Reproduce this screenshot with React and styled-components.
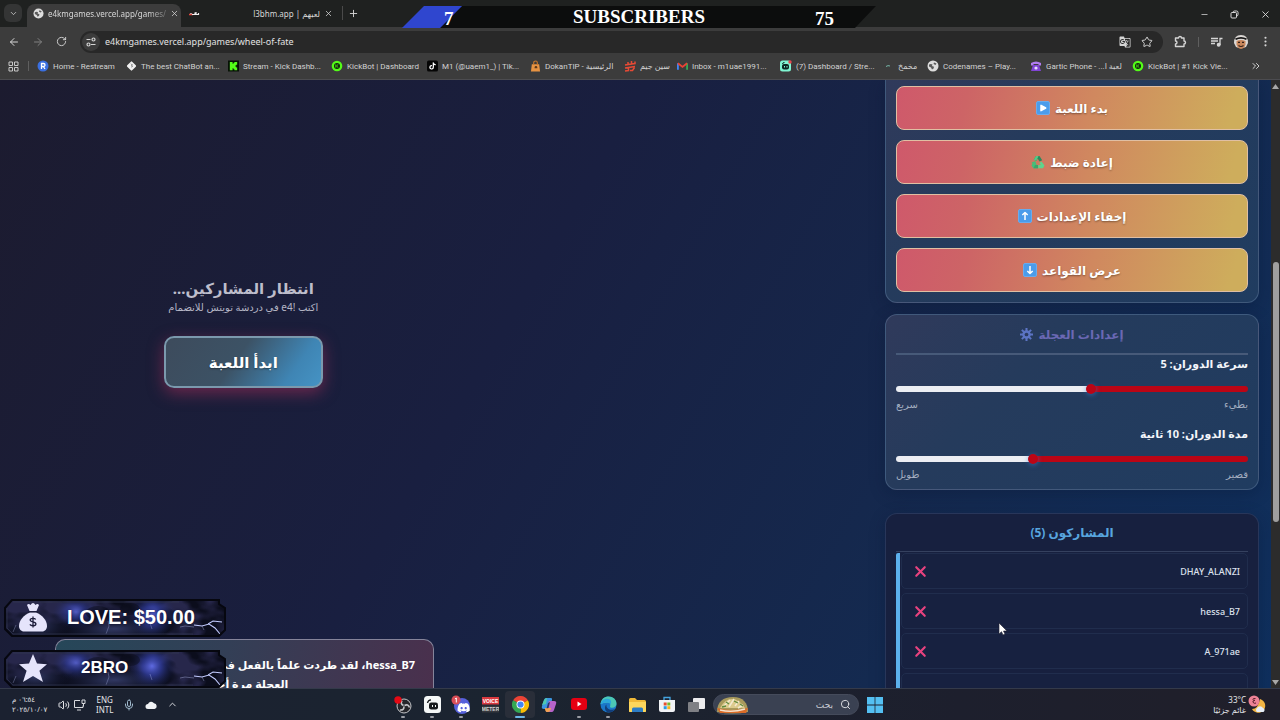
import React, { useState } from "react";
import styled, { createGlobalStyle } from "styled-components";
import {
  ArrowLeft,
  ArrowRight,
  ChevronDown,
  ChevronUp,
  ChevronsRight,
  EllipsisVertical,
  Mic,
  Minus,
  Plus,
  RotateCw,
  Search,
  Star,
  Volume2,
  X,
} from "lucide-react";
import { FaDiscord, FaTiktok } from "react-icons/fa";
import { MdGTranslate } from "react-icons/md";

const UI = `"Noto Sans", "DejaVu Sans", sans-serif`;

const GlobalStyle = createGlobalStyle`
  * {
    box-sizing: border-box;
  }
  body {
    margin: 0;
    background: #1a1a2e;
    font-family: ${UI};
  }
  button, input {
    font-family: inherit;
  }
  button {
    padding: 0;
    border: none;
    background: none;
    color: inherit;
    cursor: pointer;
  }
  a {
    color: inherit;
    text-decoration: none;
  }
`;

const Window = styled.div`
  display: flex;
  flex-direction: column;
  height: 100vh;
  overflow: hidden;
  position: relative;
`;

/* ---------- browser chrome ---------- */

const TabStrip = styled.div`
  display: flex;
  align-items: flex-end;
  height: 27px;
  flex: none;
  background: #1f2120;
  color: #d8d8d8;
`;

const TabSearch = styled.button`
  width: 18px;
  height: 18px;
  margin: 0 5px 5px 4px;
  border-radius: 6px;
  && {
    background: #343535;
  }
  display: flex;
  align-items: center;
  justify-content: center;
`;

const Tab = styled.div`
  display: flex;
  align-items: center;
  gap: 4px;
  width: ${({ $active }) => ($active ? "154px" : "158px")};
  height: 23px;
  padding: 0 6px 4px;
  border-radius: 8px 8px 0 0;
  background: ${({ $active }) => ($active ? "#3c3c3c" : "transparent")};
  font-size: 8px;
  svg {
    flex: none;
  }
  button {
    display: flex;
  }
`;

const TabTitle = styled.span`
  flex: 1;
  white-space: nowrap;
  text-align: ${({ $end }) => ($end ? "right" : "left")};
  mask-image: ${({ $end }) => ($end ? "none" : "linear-gradient(to right, #000 85%, rgba(0, 0, 0, 0.3))")};
`;

const NewTab = styled.button`
  display: flex;
  align-items: center;
  height: 14px;
  margin: 0 0 7px 3px;
  && {
    padding-left: 5px;
    border-left: 1px solid #4a4a4a;
  }
`;

const WindowButtons = styled.div`
  display: flex;
  align-items: center;
  margin-left: auto;
  padding: 0 9px 7px 0;
  gap: 21px;
  button {
    display: flex;
  }
`;

const Toolbar = styled.div`
  display: flex;
  align-items: center;
  height: 29px;
  flex: none;
  padding: 0 8px;
  background: #3c3c3c;
  color: #d5d5d5;
`;

const NavButtons = styled.div`
  display: flex;
  gap: 12px;
  width: 72px;
  button {
    display: flex;
  }
`;

const AddressBar = styled.div`
  display: flex;
  align-items: center;
  flex: 1;
  height: 22px;
  padding: 0 10px 0 2px;
  gap: 5px;
  border-radius: 11px;
  background: #282828;
`;

const SiteInfo = styled.button`
  width: 18px;
  height: 18px;
  border-radius: 9px;
  && {
    background: #3c3c3c;
  }
  display: flex;
  align-items: center;
  justify-content: center;
`;

const UrlInput = styled.input`
  flex: 1;
  min-width: 0;
  border: none;
  outline: none;
  background: none;
  color: #e2e2e2;
  font-size: 9px;
  padding: 0;
`;

const ToolbarEnd = styled.div`
  display: flex;
  align-items: center;
  gap: 11px;
  margin-left: 11px;
  button {
    display: flex;
  }
`;

const Bar = styled.span`
  width: 1px;
  height: 10px;
  background: #5f5f5f;
`;

const Bookmarks = styled.nav`
  display: flex;
  align-items: center;
  height: 24px;
  flex: none;
  padding: 0 18px 3px 8px;
  background: #3c3c3c;
  border-bottom: 1px solid #4c4c50;
  color: #d2d2d2;
  font-family: Roboto, "DejaVu Sans", sans-serif;
  font-size: 8px;
`;

const AppsCell = styled.button`
  display: flex;
  align-items: center;
  justify-content: space-between;
  width: 21px;
  margin-right: 8px;
`;

const Bookmark = styled.a`
  display: flex;
  align-items: center;
  gap: 4px;
  width: ${({ $width }) => $width}px;
  white-space: nowrap;
  svg {
    flex: none;
  }
`;

/* ---------- page ---------- */

const Viewport = styled.main`
  display: flex;
  flex: 1;
  min-height: 0;
  position: relative;
`;

const Page = styled.div`
  display: flex;
  flex: 1;
  min-width: 0;
  overflow: hidden;
  padding-right: 12px;
  background: linear-gradient(120deg, #1c1b2f 0%, #191f40 40%, #142a50 75%, #0f305e 100%);
`;

const Stage = styled.section`
  flex: 1;
  position: relative;
`;

const Waiting = styled.div`
  width: 55%;
  padding-top: 198px;
  display: flex;
  flex-direction: column;
  align-items: center;
  color: #bdbdcb;
`;

const WaitingTitle = styled.h2`
  margin: 0;
  font-size: 15px;
  line-height: 20px;
`;

const WaitingHint = styled.p`
  margin: 0;
  font-size: 10px;
  line-height: 18px;
  color: #b4b5c4;
`;

const PlayButton = styled.button`
  width: 159px;
  height: 52px;
  margin-top: 20px;
  && {
    border: 2px solid #7b99ad;
    background: linear-gradient(125deg, #3d4b5c 0%, #3c5265 45%, #3f85b4 80%, #4593c4 100%);
    color: #fff;
  }
  border-radius: 10px;
  box-shadow: 0 5px 16px rgba(190, 50, 95, 0.5);
  font-size: 15px;
  font-weight: 700;
  text-shadow: 0 1px 2px rgba(0, 0, 0, 0.4);
`;

const Toast = styled.div`
  position: absolute;
  left: 55px;
  bottom: 0;
  width: 379px;
  height: 49px;
  padding: 15px 18px 0;
  overflow: hidden;
  border: 1px solid #85849a;
  border-bottom: none;
  border-radius: 10px 10px 0 0;
  background: linear-gradient(100deg, #264759 0%, #333f56 45%, #4a304d 100%);
  color: #fff;
  font-size: 11px;
  font-weight: 700;
  line-height: 19px;
`;

const ToastLine = styled.div`
  text-align: ${({ $center }) => ($center ? "center" : "right")};
  white-space: nowrap;
`;

const Sidebar = styled.aside`
  width: 374px;
  flex: none;
`;

const Card = styled.section`
  padding: 0 10px 7px;
  margin-top: 11px;
  border: 1px solid rgba(150, 180, 215, 0.25);
  border-radius: 12px;
  background: linear-gradient(135deg, #303a5b 0%, #253b5c 35%, #203c60 100%);
  box-shadow: 0 4px 16px rgba(8, 20, 50, 0.3);
`;

const ControlsCard = styled(Card)`
  display: flex;
  flex-direction: column;
  gap: 10px;
  margin-top: 0;
  padding: 6px 10px 10px;
  border-top: none;
  border-radius: 0 0 12px 12px;
`;

const ListCard = styled(Card)`
  margin-top: 23px;
  min-height: 220px;
  border-color: rgba(110, 145, 200, 0.2);
  background: #17203f;
`;

const ControlButton = styled.button`
  display: flex;
  align-items: center;
  justify-content: center;
  gap: 5px;
  height: 44px;
  border-radius: 8px;
  && {
    border: 1px solid #e0bfa3;
    background: linear-gradient(105deg, #cf596b 0%, #cd6466 20%, #d0885f 55%, #cead5c 95%);
    color: #fff;
  }
  font-size: 12px;
  font-weight: 700;
  text-shadow: 0 1px 2px rgba(0, 0, 0, 0.4);
`;

const CardTitle = styled.h3`
  display: flex;
  align-items: center;
  justify-content: center;
  gap: 5px;
  height: ${({ $thin }) => ($thin ? "38px" : "40px")};
  margin: 0;
  border-bottom: ${({ $thin }) => ($thin ? "1px solid #35415f" : "2px solid #475a79")};
  color: ${({ $color }) => $color};
  font-size: 12px;
`;

const Setting = styled.div`
  display: flex;
  flex-direction: column;
  & + & {
    margin-top: 13px;
  }
`;

const SettingLabel = styled.label`
  color: #f3f5fa;
  font-size: 11px;
  font-weight: 700;
  line-height: 18px;
`;

const Range = styled.input`
  appearance: none;
  width: 100%;
  height: 12px;
  margin: 10px 0 2px;
  background: none;
  &::-webkit-slider-runnable-track {
    height: 6px;
    border-radius: 3px;
    background: linear-gradient(to left, #bb0515 ${({ $fill }) => $fill}%, #eceef3 ${({ $fill }) => $fill}%);
  }
  &::-webkit-slider-thumb {
    appearance: none;
    width: 10px;
    height: 10px;
    margin-top: -2px;
    border-radius: 5px;
    background: #bb0515;
    box-shadow: 0 1px 5px rgba(50, 130, 220, 0.6);
  }
`;

const RangeEnds = styled.div`
  display: flex;
  justify-content: space-between;
  color: #a3aec0;
  font-size: 10px;
  line-height: 15px;
`;

const PlayerList = styled.ul`
  display: flex;
  flex-direction: column;
  gap: 4px;
  margin: 1px 0 0;
  padding: 0;
  list-style: none;
  border-left: 4px solid #5cb0ec;
  border-radius: 2px;
`;

const PlayerRow = styled.li`
  display: flex;
  align-items: center;
  justify-content: space-between;
  height: 36px;
  margin-left: 1px;
  padding: 0 7px 0 10px;
  border: 1px solid #202d4d;
  border-radius: 5px;
  background: #172140;
  color: #dde2ee;
  font-size: 9px;
  font-weight: 500;
  button {
    display: flex;
  }
`;

const Scrollbar = styled.div`
  display: grid;
  grid-template-rows: 12px 170fr 260fr 154fr 12px;
  justify-items: center;
  align-items: center;
  width: 9px;
  flex: none;
  background: #2c2c2c;
`;

const Thumb = styled.span`
  grid-row: 3;
  width: 6px;
  height: 100%;
  border-radius: 3px;
  background: #9f9f9f;
`;

/* ---------- stream overlays ---------- */

const GoalBar = styled.div`
  position: absolute;
  top: 6px;
  left: 50%;
  width: 474px;
  height: 22px;
  margin-left: -238px;
  padding: 0 42px;
  display: grid;
  grid-template-columns: 1fr auto 1fr;
  align-items: center;
  clip-path: polygon(22px 0, 100% 0, 453px 100%, 0 100%);
  background: linear-gradient(135deg, #2f46cf 0 42px, #0c0d0d 43px);
  color: #fff;
  font-family: "Liberation Serif", serif;
  font-size: 19px;
  font-weight: 700;
  line-height: 22px;
`;

const GoalCount = styled.span`
  padding-top: 4px;
  line-height: 18px;
  text-align: ${({ $end }) => ($end ? "right" : "left")};
`;

const Badges = styled.div`
  position: absolute;
  left: 4px;
  bottom: 0;
  display: flex;
  flex-direction: column;
  gap: 13px;
`;

const Badge = styled.div`
  position: relative;
  width: 222px;
  height: 38px;
  display: flex;
  align-items: center;
  padding-bottom: 2px;
  color: #fff;
  font-family: "Liberation Sans", sans-serif;
  font-size: ${({ $size }) => $size}px;
  font-weight: 700;
  > svg:first-child {
    position: absolute;
    inset: 0;
  }
`;

const BadgeIcon = styled.span`
  position: relative;
  display: flex;
  margin-left: 14px;
`;

const BadgeText = styled.span`
  position: relative;
  margin-left: ${({ $indent }) => $indent}px;
  text-shadow: 0 0 3px rgba(0, 0, 30, 0.6);
`;

const Pointer = styled.svg`
  position: absolute;
  left: 998px;
  top: 542px;
`;

/* ---------- taskbar ---------- */

const Taskbar = styled.footer`
  display: grid;
  grid-template-columns: 1fr auto 1fr;
  align-items: center;
  height: 32px;
  flex: none;
  padding: 0 12px;
  border-top: 1px solid #343a4a;
  background: linear-gradient(to right, #1b2130, #1b2430 40%, #1d1f2d 75%, #201f2a);
  color: #e4e5e9;
  font-size: 8px;
  line-height: 10px;
`;

const Tray = styled.div`
  display: flex;
  align-items: center;
  gap: 10px;
`;

const Clock = styled.time`
  width: 36px;
  font-size: 7px;
  text-align: left;
  white-space: nowrap;
`;

const TrayPair = styled.span`
  display: flex;
  gap: 3px;
`;

const Lang = styled.span`
  text-align: center;
`;

const Dock = styled.div`
  display: flex;
  align-items: center;
  padding-right: 9px;
`;

const Apps = styled.div`
  display: grid;
  grid-template-columns: repeat(11, 1fr);
  width: 323px;
  margin-right: 2px;
`;

const AppButton = styled.button`
  position: relative;
  height: 27px;
  display: flex;
  align-items: center;
  justify-content: center;
  border-radius: 4px;
  && {
    background: ${({ $active }) => ($active ? "#292e39" : "none")};
  }
  &::after {
    content: "";
    position: absolute;
    bottom: 0;
    width: ${({ $active }) => ($active ? "10px" : "4px")};
    height: 2px;
    border-radius: 1px;
    background: ${({ $active, $open }) => ($active ? "#6cb7e8" : $open ? "#9a9da5" : "none")};
  }
`;

const SearchBox = styled.label`
  display: flex;
  align-items: center;
  gap: 5px;
  width: 146px;
  height: 21px;
  padding: 0 7px 0 2px;
  margin-right: 8px;
  border: 1px solid #454b5b;
  border-radius: 11px;
  background: #3a4152;
  input {
    flex: 1;
    min-width: 0;
    padding: 0 2px;
    border: none;
    outline: none;
    background: none;
    font-size: 9px;
  }
  input::placeholder {
    color: #c9ccd4;
  }
`;

const Weather = styled.div`
  display: flex;
  align-items: center;
  justify-content: flex-end;
  gap: 2px;
  text-align: right;
`;

/* ---------- drawings ---------- */

const Globe = ({ size = 12 }) => (
  <svg width={size} height={size} viewBox="0 0 12 12">
    <circle cx="6" cy="6" r="5.500" fill="#dedede" />
    <path d="M2 4.500q2-1 3.500 0l-.5 1.500 2 .8-.4 1.700L5 9.500 4 7.500 2 6.500zM7 2.500l2.500 1-1 1.500-2-1z" fill="#5b5b5b" />
  </svg>
);

const KickBot = () => (
  <svg width="12" height="12" viewBox="0 0 12 12">
    <circle cx="6" cy="6" r="5.300" fill="#53fc18" />
    <circle cx="6" cy="6" r="3" fill="#12240c" />
    <path d="M4.800 4.400v3.200M7.300 4.300L5.500 6l1.800 1.700" stroke="#53fc18" strokeWidth="0.800" fill="none" />
  </svg>
);

const bookmarkIcons = {
  restream: (
    <svg width="12" height="12" viewBox="0 0 12 12">
      <circle cx="6" cy="6" r="5.500" fill="#3a6fe0" />
      <path d="M4.500 9V3.500h2a1.500 1.500 0 010 3h-2M6.300 6.500L8 9" stroke="#fff" strokeWidth="1.300" fill="none" />
    </svg>
  ),
  bot: (
    <svg width="11" height="12" viewBox="0 0 12 12">
      <path d="M6 2l4 4-4 4-4-4z" fill="#f0f0f0" stroke="#f0f0f0" strokeWidth="2" strokeLinejoin="round" />
      <path d="M5.500 3.500L7 5 5.500 6.200M7.500 6L6 7.200" stroke="#5a5a5a" strokeWidth="0.900" fill="none" />
    </svg>
  ),
  kick: (
    <svg width="11" height="12" viewBox="0 0 12 12">
      <rect width="12" height="12" fill="#071106" />
      <path d="M2 1.500h3v2h1v-1h1v-1h3v3H9v1H8v1h1v1h1v3H7v-1H6v-1H5v2H2z" fill="#53fc18" />
    </svg>
  ),
  kickbot: <KickBot />,
  tiktok: (
    <svg width="11" height="12" viewBox="0 0 12 12">
      <rect width="12" height="12" rx="2" fill="#050505" />
      <FaTiktok x="2" y="2" width="8" height="8" color="#fff" />
    </svg>
  ),
  dokan: (
    <svg width="11" height="12" viewBox="0 0 12 12">
      <path d="M2 4h8l1 8H1z" fill="#e79342" />
      <path d="M4 5V2.500a2 2 0 014 0V5" stroke="#c6762b" strokeWidth="1.200" fill="none" />
      <path d="M5 7.500a1.500 1.500 0 113 0v1H5z" fill="#5b3719" />
    </svg>
  ),
  seen: (
    <svg width="12" height="12" viewBox="0 0 12 12">
      <path d="M1 5l3-.5V2M4 4.500L7.500 4V1M7.500 4L11 3.500V1.500M1 8l10-1.500M1 11l3.500-.5V8M6 10.500h2.500l2-3" stroke="#e64a35" strokeWidth="1.500" fill="none" />
    </svg>
  ),
  gmail: (
    <svg width="11" height="12" viewBox="0 0 12 12">
      <path d="M1 10V3" stroke="#4285f4" strokeWidth="2" />
      <path d="M11 10V3" stroke="#34a853" strokeWidth="2" />
      <path d="M1 3l5 4 5-4" stroke="#ea4335" strokeWidth="2" fill="none" />
    </svg>
  ),
  stream: (
    <svg width="12" height="12" viewBox="0 0 12 12">
      <rect y="0.500" width="11" height="11" rx="2.500" fill="#80f5d2" />
      <rect x="2" y="4" width="7" height="5.500" rx="2" fill="#0d2722" />
      <path d="M2.500 4q0-1.500 2-1.500" stroke="#0d2722" fill="none" />
      <path d="M4.500 6v1.500M7 6v1.500" stroke="#80f5d2" />
      <circle cx="10" cy="2" r="1.700" fill="#e8474e" />
    </svg>
  ),
  dash: (
    <svg width="12" height="12" viewBox="0 0 12 12">
      <path d="M4 6.500q2-1.500 4-.5" stroke="#76b7a8" fill="none" />
    </svg>
  ),
  globe: <Globe />,
  phone: (
    <svg width="12" height="12" viewBox="0 0 12 12">
      <path d="M1 5.500V3q5-3 10 0v2.500H8.500V4h-5v1.500z" fill="#b17cf1" />
      <path d="M3 5h6l2 6H1z" fill="#8144d6" />
      <circle cx="6" cy="8" r="1.600" fill="#e8dbff" />
    </svg>
  ),
};

const EmojiArrow = ({ d, fill = "none" }) => (
  <svg width="14" height="14" viewBox="0 0 14 14">
    <rect x="0.500" y="0.500" width="13" height="13" rx="1.500" fill="#4b9cea" stroke="#6aabec" />
    <path d={d} fill={fill} stroke="#fff" strokeWidth="1.500" strokeLinejoin="round" />
  </svg>
);

const controlIcons = {
  play: <EmojiArrow d="M5 4.300v5.400L9.700 7z" fill="#fff" />,
  up: <EmojiArrow d="M7 11V3.500M4.300 6L7 3.500 9.700 6" />,
  down: <EmojiArrow d="M7 3v7.500M4.300 8L7 10.500 9.700 8" />,
  recycle: (
    <svg width="14" height="14" viewBox="0 0 14 14">
      <path d="M5 1h3.500l2.700 4.300-2.700 1.200L6.700 3.500 5.300 6 2.700 4.500z" fill="#2b8a5c" />
      <path d="M5 1h2.500L5.300 6 2.700 4.500z" fill="#55c884" />
      <path d="M10.500 6.500l3 4-1.500 2.700H7.300V10h2.500L8.300 7.700z" fill="#5fd58c" />
      <path d="M.5 7.500L4.300 6l1.300 4H7v3.200H2.300L.5 10.500l1-2z" fill="#48bd78" />
      <path d="M2.500 13.200L4 10h3v3.200z" fill="#3aa56b" />
    </svg>
  ),
};

const Gear = () => (
  <svg width="13" height="13" viewBox="0 0 14 14">
    <path d="M7 0v14M0 7h14M2 2l10 10M12 2L2 12" stroke="#5c74c4" strokeWidth="2.200" />
    <circle cx="7" cy="7" r="4.600" fill="#5c74c4" />
    <circle cx="7" cy="7" r="2" fill="#2b3b5f" />
  </svg>
);

const BadgeFrame = ({ id }) => (
  <svg width="222" height="38" viewBox="0 0 222 38">
    <defs>
      <filter id={`${id}-clouds`} x="0" y="0" width="100%" height="100%">
        <feTurbulence type="fractalNoise" baseFrequency="0.030 0.050" numOctaves="3" seed="5" />
        <feColorMatrix values="0 0 0 0 0.020  0 0 0 0 0.020  0 0 0 0 0.070  4 0 0 0 -1.700" />
      </filter>
      <radialGradient id={`${id}-glow`}>
        <stop offset="0" stopColor="#6b78ff" />
        <stop offset="0.400" stopColor="#3a48bc" stopOpacity="0.750" />
        <stop offset="1" stopColor="#20285c" stopOpacity="0" />
      </radialGradient>
      <radialGradient id={`${id}-haze`}>
        <stop offset="0" stopColor="#4d5896" stopOpacity="0.600" />
        <stop offset="1" stopColor="#232b54" stopOpacity="0" />
      </radialGradient>
      <clipPath id={`${id}-clip`}>
        <path d="M8 1h207v4l6 4v22l-6 6H8l-7-7V9z" />
      </clipPath>
    </defs>
    <g clipPath={`url(#${id}-clip)`}>
      <rect width="222" height="38" fill="#0b0d1c" />
      <ellipse cx="32" cy="26" rx="34" ry="18" fill={`url(#${id}-haze)`} />
      <ellipse cx="110" cy="30" rx="54" ry="16" fill={`url(#${id}-haze)`} />
      <rect width="222" height="38" filter={`url(#${id}-clouds)`} />
      <ellipse cx="72" cy="13" rx="24" ry="17" fill={`url(#${id}-glow)`} opacity="0.700" />
      <ellipse cx="148" cy="16" rx="24" ry="24" fill={`url(#${id}-glow)`} opacity="0.850" />
      <ellipse cx="94" cy="14" rx="12" ry="7" fill="#0b0d1c" opacity="0.500" />
      <ellipse cx="126" cy="10" rx="10" ry="6" fill="#0b0d1c" opacity="0.500" />
      <g fill="none" stroke="#c3ccff">
        <path d="M190 26l8 1 7-2 6 4 5 6M204 25l5-3 9 1" strokeWidth="1.100" />
        <path d="M176 28l5-1 9 1M198 27l2 4" strokeWidth="0.600" opacity="0.600" />
        <path d="M104 22l1 5-3 8M12 26l-3 7M146 24l2 6" strokeWidth="0.600" opacity="0.500" />
      </g>
    </g>
    <path d="M8 1h207v4l6 4v22l-6 6H8l-7-7V9z" fill="none" stroke="#06070f" strokeWidth="2" />
    <path d="M9 3h166M3 9v20l6 6h180" fill="none" stroke="#343954" strokeWidth="0.700" />
  </svg>
);

const MoneyBag = () => (
  <svg width="30" height="30" viewBox="0 0 30 30">
    <path d="M9 3q1.500-2 3.500 0Q15-1 17.500 3q2-2 3.500 0l-2.500 6h-7z" fill="#e5e4fb" />
    <path d="M12 10.500h6C24 13 29 18 29 24c0 3-2 5.500-5 5.500H6c-3 0-5-2.500-5-5.500 0-6 5-11 11-13.500z" fill="#e5e4fb" />
    <path d="M17.700 17.500c-1-1.500-5.500-1.500-5.500.6 0 2.500 5.700 1.200 5.700 3.900 0 2.300-5 2.200-6 .4M15 14.500v11" stroke="#1c1d3a" strokeWidth="1.300" fill="none" />
    <path d="M10.500 9.700h9" stroke="#1c1d3a" strokeWidth="0.800" />
  </svg>
);

const BigStar = () => (
  <svg width="30" height="30" viewBox="0 0 30 30">
    <path d="M15 1l4 9.500 10 .7-7.600 6.600L25 29l-10-6-10 6 3.600-11.200L1 11.200l10-.7z" fill="#e5e4fb" />
  </svg>
);

const Avatar = () => (
  <svg width="14" height="14" viewBox="0 0 14 14">
    <path d="M0 8q0-8 7-8t7 8l-2 4-3 1H5l-3-1z" fill="#dcd8d5" />
    <path d="M2.500 6q4.500-2 9 0v3.500q-1 4-4.500 4.500-3.500-.5-4.500-4.500z" fill="#c9875c" />
    <path d="M1.500 4.300Q7 1.300 12.500 4.300" stroke="#161616" strokeWidth="1.800" fill="none" />
    <path d="M4 7.300h2M8 7.300h2M4.500 10.500q2.500 2 5 0" stroke="#35211a" strokeWidth="1.200" fill="none" />
  </svg>
);

const taskApps = [
  {
    name: "OBS Studio",
    open: true,
    icon: (
      <svg width="18" height="18" viewBox="0 0 18 18">
        <circle cx="10" cy="10" r="7" fill="#25262b" stroke="#c4c5c9" />
        <path d="M9.500 9.500Q6 8 8 4.500M10.500 9.500q3.500-2 5 2M10 10.500q0 4-4 3.500" stroke="#c4c5c9" strokeWidth="1.600" fill="none" />
        <circle cx="4" cy="4" r="3.700" fill="#e50914" />
      </svg>
    ),
  },
  {
    name: "Streamlabs",
    open: true,
    icon: (
      <svg width="17" height="17" viewBox="0 0 17 17">
        <rect width="17" height="17" rx="3.500" fill="#f4f7f7" />
        <path d="M3.500 7q.5-3 3.500-3.200" stroke="#15191c" strokeWidth="1.300" fill="none" />
        <rect x="5" y="6.500" width="9" height="7" rx="2.200" fill="#15191c" />
        <path d="M8.500 9v2M11.500 9v2" stroke="#f4f7f7" />
      </svg>
    ),
  },
  {
    name: "Discord",
    open: true,
    icon: (
      <svg width="20" height="20" viewBox="0 0 20 20">
        <circle cx="11" cy="11" r="8" fill="#5661dc" />
        <FaDiscord x="6" y="6" width="10" height="10" color="#fff" />
        <circle cx="5" cy="5" r="4.500" fill="#d94e57" />
        <path d="M4 4l1.300-1V7.500" stroke="#fff" fill="none" />
      </svg>
    ),
  },
  {
    name: "Voicemeeter",
    icon: (
      <svg width="17" height="16" viewBox="0 0 17 16">
        <rect width="17" height="7.500" fill="#da3a40" />
        <rect y="8.500" width="17" height="7" fill="#35373d" />
        <text x="8.500" y="6" fontSize="5" fontWeight="700" fill="#fff" textAnchor="middle" fontFamily="Liberation Sans">VOICE</text>
        <text x="8.500" y="14" fontSize="5" fontWeight="700" fill="#d2d2d2" textAnchor="middle" fontFamily="Liberation Sans">METER</text>
      </svg>
    ),
  },
  {
    name: "Chrome",
    active: true,
    icon: (
      <svg width="17" height="17" viewBox="0 0 18 18">
        <path d="M9 9L1.200 4.500A9 9 0 0116.800 4.500z" fill="#ea4335" />
        <path d="M9 9L16.800 4.500A9 9 0 019 18z" fill="#fbbc05" />
        <path d="M9 9v9A9 9 0 011.200 4.500z" fill="#34a853" />
        <circle cx="9" cy="9" r="4.200" fill="#fff" />
        <circle cx="9" cy="9" r="3.300" fill="#4285f4" />
      </svg>
    ),
  },
  {
    name: "Copilot",
    icon: (
      <svg width="16" height="16" viewBox="0 0 16 16">
        <path d="M5 1h5q1.500 0 1 2L8.500 12H3Q0 12 1 9l2-6q.6-2 2-2z" fill="#3b95e0" />
        <path d="M1 8l2-5q1-2 3-2L5 7z" fill="#4fc9b0" />
        <path d="M8 4h5q3 0 2 3l-2 6q-.7 2-2 2H6q-1.500 0-1-2z" fill="#b763c9" />
        <path d="M4 11h6l-1 3q-.5 1-2 1H6q-2 0-2-4z" fill="#f2a152" />
        <path d="M7 6l2-1-1.500 6-2 .5z" fill="#233a6b" />
      </svg>
    ),
  },
  {
    name: "YouTube",
    open: true,
    icon: (
      <svg width="16" height="13" viewBox="0 0 16 13">
        <rect width="16" height="12" rx="3" fill="#e60012" />
        <path d="M6.500 3.500v5L10.500 6z" fill="#fff" />
      </svg>
    ),
  },
  {
    name: "Edge",
    open: true,
    icon: (
      <svg width="17" height="17" viewBox="0 0 18 18">
        <circle cx="9" cy="9" r="8.500" fill="#1a77c9" />
        <path d="M.6 8.500C1 3 5 .5 9 .5c5 0 8.500 3.500 8.500 7.300 0 3-2 4.700-4.500 4.700-2 0-3-.8-2.200-2 .6-1.500-.3-3.500-3-3.500-3 0-5.200 1-7.200 1.500z" fill="#4cc8b4" />
        <path d="M.6 8.500C1.500 4.500 5 3 7.500 3c4 0 5 3 4 6-.6-1.500-1.600-2.200-3.700-2.200-3 0-5 .5-7.200 1.700z" fill="#2ba6dc" />
        <path d="M7 9c-1 3 2 6 6 5.500 1 0 2-.3 3-1-1.500 2.800-4.500 4-7 4C5 17 4 11 7 9z" fill="#123f7c" />
      </svg>
    ),
  },
  {
    name: "File Explorer",
    icon: (
      <svg width="17" height="16" viewBox="0 0 17 16">
        <path d="M0 2.500Q0 1 1.500 1H6l2 2h7.500Q17 3 17 4.500V14q0 1-1 1H1q-1 0-1-1z" fill="#f0b938" />
        <path d="M0 5h17v9q0 1-1 1H1q-1 0-1-1z" fill="#fcd65c" />
        <path d="M3 15v-3q0-1.500 1.500-1.500h8Q14 10.500 14 12v3z" fill="#2c7cc4" />
      </svg>
    ),
  },
  {
    name: "Microsoft Store",
    icon: (
      <svg width="16" height="17" viewBox="0 0 16 17">
        <path d="M5 4V1.500h6V4" stroke="#44a4e0" strokeWidth="1.300" fill="none" />
        <path d="M0 4h16v10q0 2-2 2H2q-2 0-2-2z" fill="#f1f3f6" />
        <path d="M4.700 6.500h3v3h-3z" fill="#e8502f" />
        <path d="M8.300 6.500h3v3h-3z" fill="#7bb928" />
        <path d="M4.700 10.200h3v3h-3z" fill="#2a9be3" />
        <path d="M8.300 10.200h3v3h-3z" fill="#f6b61d" />
      </svg>
    ),
  },
  {
    name: "Task view",
    icon: (
      <svg width="17" height="16" viewBox="0 0 17 16">
        <rect x="5" y="1" width="12" height="11" rx="1" fill="#ececee" />
        <rect x="0" y="5" width="11" height="10" rx="1" fill="#7f8085" />
      </svg>
    ),
  },
];

const FoodBowl = () => (
  <svg width="33" height="18" viewBox="0 0 33 18">
    <path d="M1 16C1 6 7 1 17 1s15 6 15 15q-15 3-31 0z" fill="#a89a5c" />
    <path d="M4 12q5-9 12-9t13 9z" fill="#dccb8d" />
    <path d="M8 10l6-6M13 11l5-8M19 10l4-5M22 12l5-3" stroke="#f3ead0" strokeWidth="1.500" />
    <path d="M10 6l3 2M18 5l4 2M6 11l4-1M24 8l3 2" stroke="#5f8a3f" strokeWidth="1.300" />
    <path d="M1 12q15 4 31 0l-2 5H4z" fill="#d96b28" />
    <path d="M4 14q12 3 25-1" stroke="#f5e2cb" strokeWidth="1.500" fill="none" />
  </svg>
);

const bookmarks = [
  { icon: "restream", label: "Home - Restream", width: 89 },
  { icon: "bot", label: "The best ChatBot an...", width: 102 },
  { icon: "kick", label: "Stream - Kick Dashb...", width: 103 },
  { icon: "kickbot", label: "KickBot | Dashboard", width: 96 },
  { icon: "tiktok", label: "M1 (@uaem1_) | Tik...", width: 103 },
  { icon: "dokan", label: "DokanTIP - الرئيسية", width: 94 },
  { icon: "seen", label: "سين جيم", width: 53 },
  { icon: "gmail", label: "Inbox - m1uae1991...", width: 103 },
  { icon: "stream", label: "(7) Dashboard / Stre...", width: 102 },
  { icon: "dash", label: "مخمخ", width: 45 },
  { icon: "globe", label: "Codenames – Play...", width: 103 },
  { icon: "phone", label: "Gartic Phone - ...لعبة ا", width: 102 },
  { icon: "kickbot", label: "KickBot | #1 Kick Vie...", width: 100 },
];

const controls = [
  { icon: "play", label: "بدء اللعبة" },
  { icon: "recycle", label: "إعادة ضبط" },
  { icon: "up", label: "إخفاء الإعدادات" },
  { icon: "down", label: "عرض القواعد" },
];

const players = ["DHAY_ALANZI", "hessa_B7", "A_971ae"];

const RangeSetting = ({ id, label, unit, min, max, initial, low, high }) => {
  const [value, setValue] = useState(initial);
  const fill = ((value - min) / (max - min)) * 100;
  return (
    <Setting>
      <SettingLabel htmlFor={id}>
        {label}: {value} {unit}
      </SettingLabel>
      <Range
        id={id}
        type="range"
        min={min}
        max={max}
        value={value}
        $fill={fill}
        onChange={(e) => setValue(Number(e.target.value))}
      />
      <RangeEnds>
        <span>{low}</span>
        <span>{high}</span>
      </RangeEnds>
    </Setting>
  );
};

const BrowserChrome = () => (
  <header>
    <TabStrip>
      <TabSearch aria-label="Search tabs">
        <ChevronDown size={9} />
      </TabSearch>
      <Tab $active>
        <Globe size={11} />
        <TabTitle>e4kmgames.vercel.app/games/</TabTitle>
        <button aria-label="Close tab">
          <X size={9} />
        </button>
      </Tab>
      <Tab>
        <svg width="14" height="10" viewBox="0 0 14 10">
          <path d="M2 5.500h4" stroke="#e4473e" strokeWidth="1.500" />
          <path d="M5 5.500h3v-2M9 3v2.500h2.500V4M4 4v1" stroke="#eee" strokeWidth="1.200" fill="none" />
        </svg>
        <TabTitle $end>l3bhm.app | لعبهم</TabTitle>
        <button aria-label="Close tab">
          <X size={9} />
        </button>
      </Tab>
      <NewTab aria-label="New tab">
        <Plus size={11} />
      </NewTab>
      <WindowButtons>
        <button aria-label="Minimize">
          <Minus size={9} />
        </button>
        <button aria-label="Restore">
          <svg width="9" height="9" viewBox="0 0 9 9" fill="none" stroke="#d8d8d8">
            <rect x="1" y="2.500" width="5.500" height="5.500" rx="1" />
            <path d="M3 2.500Q3 1 4.500 1H6.500Q8 1 8 2.500V4.500Q8 6 6.500 6" />
          </svg>
        </button>
        <button aria-label="Close">
          <X size={11} />
        </button>
      </WindowButtons>
    </TabStrip>
    <Toolbar>
      <NavButtons>
        <button aria-label="Back">
          <ArrowLeft size={12} />
        </button>
        <button aria-label="Forward">
          <ArrowRight size={12} color="#808080" />
        </button>
        <button aria-label="Reload">
          <RotateCw size={11} />
        </button>
      </NavButtons>
      <AddressBar>
        <SiteInfo aria-label="Site information">
          <svg width="10" height="10" viewBox="0 0 10 10" fill="none" stroke="#d5d5d5" strokeWidth="1.200">
            <path d="M0.500 2.500h4M5 7.500h4.500" />
            <circle cx="7.500" cy="2.500" r="1.500" />
            <circle cx="2.500" cy="7.500" r="1.500" />
          </svg>
        </SiteInfo>
        <UrlInput aria-label="Address" defaultValue="e4kmgames.vercel.app/games/wheel-of-fate" />
        <MdGTranslate size={12} />
        <Star size={12} style={{ marginLeft: 5 }} />
      </AddressBar>
      <ToolbarEnd>
        <button aria-label="Extensions">
          <svg width="13" height="13" viewBox="0 0 13 13" fill="none" stroke="#d5d5d5" strokeWidth="1.400" strokeLinejoin="round">
            <path d="M1.500 3H4.500a1.500 1.500 0 013 0H10v3a1.500 1.500 0 010 3v2.500H1.500V9a1.500 1.500 0 000-3z" />
          </svg>
        </button>
        <Bar />
        <button aria-label="Media">
          <svg width="13" height="12" viewBox="0 0 13 12" fill="none" stroke="#d5d5d5" strokeWidth="1.300">
            <path d="M1 2.500h7M1 5h7M1 7.500h4M10 9V2.500h2.500" />
            <circle cx="8.700" cy="8.800" r="1.300" fill="#d5d5d5" />
          </svg>
        </button>
        <button aria-label="Profile">
          <Avatar />
        </button>
        <button aria-label="Menu">
          <EllipsisVertical size={13} />
        </button>
      </ToolbarEnd>
    </Toolbar>
    <Bookmarks>
      <AppsCell aria-label="Apps">
        <svg width="11" height="11" viewBox="0 0 11 11" fill="none" stroke="#c8c8c8">
          <path d="M1 1h3.500v3.500H1zM6.500 1H10v3.500H6.500zM1 6.500h3.500V10H1zM6.500 6.500H10V10H6.500z" />
        </svg>
        <Bar />
      </AppsCell>
      {bookmarks.map((item) => (
        <Bookmark key={item.label} href="#" $width={item.width}>
          {bookmarkIcons[item.icon]}
          <bdi dir="ltr">{item.label}</bdi>
        </Bookmark>
      ))}
      <ChevronsRight size={12} style={{ marginLeft: "auto" }} />
    </Bookmarks>
  </header>
);

const GamePage = () => (
  <Page>
    <Stage>
      <Waiting dir="rtl">
        <WaitingTitle>انتظار المشاركين...</WaitingTitle>
        <WaitingHint>اكتب !e4 في دردشة تويتش للانضمام</WaitingHint>
        <PlayButton>ابدأ اللعبة</PlayButton>
      </Waiting>
      <Toast dir="rtl" role="status">
        <ToastLine>hessa_B7، لقد طردت علماً بالفعل في هذه</ToastLine>
        <ToastLine $center>العجلة مرة أخرى</ToastLine>
      </Toast>
    </Stage>
    <Sidebar dir="rtl">
      <ControlsCard>
        {controls.map((item) => (
          <ControlButton key={item.icon}>
            {item.label}
            {controlIcons[item.icon]}
          </ControlButton>
        ))}
      </ControlsCard>
      <Card>
        <CardTitle $color="#6a68b4">
          إعدادات العجلة
          <Gear />
        </CardTitle>
        <RangeSetting id="speed" label="سرعة الدوران" min={1} max={10} initial={5} low="بطيء" high="سريع" />
        <RangeSetting id="duration" label="مدة الدوران" unit="ثانية" min={2} max={15} initial={10} low="قصير" high="طويل" />
      </Card>
      <ListCard>
        <CardTitle $thin $color="#57a5df">
          المشاركون (5)
        </CardTitle>
        <PlayerList>
          {players.map((name) => (
            <PlayerRow key={name}>
              {name}
              <button aria-label={`إزالة ${name}`}>
                <X size={17} color="#e8427f" strokeWidth={3} />
              </button>
            </PlayerRow>
          ))}
          <PlayerRow />
        </PlayerList>
      </ListCard>
    </Sidebar>
  </Page>
);

const App = () => {
  return (
    <Window>
      <GlobalStyle />
      <BrowserChrome />
      <Viewport>
        <GamePage />
        <Scrollbar>
          <svg width="7" height="5" viewBox="0 0 7 5">
            <path d="M3.500 0L7 5H0z" fill="#a8a8a8" />
          </svg>
          <Thumb />
          <svg width="7" height="5" viewBox="0 0 7 5" style={{ gridRow: 5 }}>
            <path d="M3.500 5L7 0H0z" fill="#a8a8a8" />
          </svg>
        </Scrollbar>
        <Badges>
          <Badge $size={20}>
            <BadgeFrame id="money" />
            <BadgeIcon>
              <MoneyBag />
            </BadgeIcon>
            <BadgeText $indent={19}>LOVE: $50.00</BadgeText>
          </Badge>
          <Badge $size={17}>
            <BadgeFrame id="star" />
            <BadgeIcon>
              <BigStar />
            </BadgeIcon>
            <BadgeText $indent={33}>2BRO</BadgeText>
          </Badge>
        </Badges>
        <Pointer width="10" height="14" viewBox="0 0 10 14">
          <path d="M1 1v11l2.500-2.300L5 13l2-1-1.500-3H9z" fill="#fff" stroke="#1b1d2b" strokeWidth="0.600" />
        </Pointer>
      </Viewport>
      <Taskbar>
        <Tray>
          <Clock dir="rtl">
            ٠٦:٥٤ م
            <br />
            ٢٠٢٥/١٠/٠٧
          </Clock>
          <TrayPair>
            <Volume2 size={12} />
            <svg width="13" height="12" viewBox="0 0 13 12" fill="none" stroke="#d8dade">
              <path d="M7 1.500H1.500v7H10V6.500M4 11h4M9 1h3v3.500H9zM10.500 4.500v3" />
            </svg>
          </TrayPair>
          <Lang>
            ENG
            <br />
            INTL
          </Lang>
          <Mic size={12} color="#9fb9cc" />
          <svg width="12" height="8" viewBox="0 0 12 8">
            <path d="M3 8a2.500 2.500 0 010-5 3.300 3.300 0 016-.7A2.900 2.900 0 019.500 8z" fill="#f0f2f5" />
          </svg>
          <ChevronUp size={11} />
        </Tray>
        <Dock>
          <Apps>
            {taskApps.map((app) => (
              <AppButton key={app.name} aria-label={app.name} $open={app.open} $active={app.active}>
                {app.icon}
              </AppButton>
            ))}
          </Apps>
          <SearchBox>
            <FoodBowl />
            <input dir="rtl" placeholder="بحث" aria-label="بحث" />
            <Search size={11} />
          </SearchBox>
          <button aria-label="Start">
            <svg width="16" height="16" viewBox="0 0 16 16" style={{ display: "block" }}>
              <path d="M0 0h7.600v7.600H0zM8.400 0H16v7.600H8.400zM0 8.400h7.600V16H0zM8.400 8.400H16V16H8.400z" fill="#54c0f2" />
            </svg>
          </button>
        </Dock>
        <Weather>
          <span>
            33°C
            <br />
            غائم جزئيًا
          </span>
          <svg width="20" height="20" viewBox="0 0 20 20">
            <path d="M12 4a7 7 0 11-8 10q6 0 8-10z" fill="#f2b544" />
            <path d="M9 17a2.500 2.500 0 010-4 3.500 3.500 0 016 0 2.200 2.200 0 01.500 4z" fill="#e6eef7" />
            <circle cx="6" cy="6" r="5.500" fill="#ee8296" />
            <path d="M7.500 3.500q-3-.3-2.500 1t2 .8q-3 .5-2 2t3 .8" stroke="#5a1f2c" fill="none" />
          </svg>
        </Weather>
      </Taskbar>
      <GoalBar>
        <GoalCount>7</GoalCount>
        <span>SUBSCRIBERS</span>
        <GoalCount $end>75</GoalCount>
      </GoalBar>
    </Window>
  );
};

export default App;
